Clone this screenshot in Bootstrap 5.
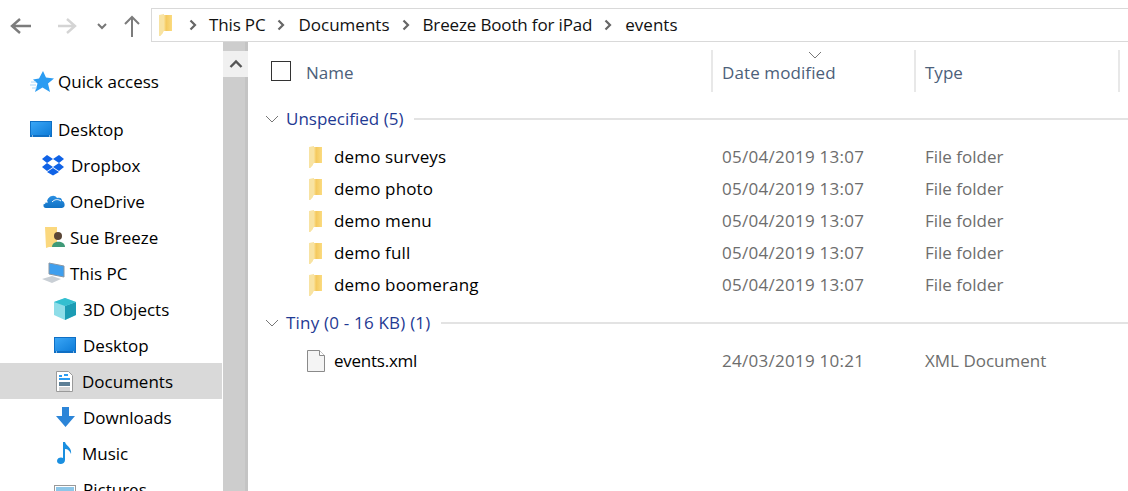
<!DOCTYPE html>
<html lang="en"><head><meta charset="utf-8"><title>events</title>
<link rel="stylesheet" href="https://cdn.jsdelivr.net/npm/bootstrap@5.3.0/dist/css/bootstrap.min.css">
<style>
html,body{height:491px;overflow:hidden;background:#fff}
body{font-family:"Open Sans","Noto Sans",sans-serif;font-size:17px;color:#000;line-height:1.2}
.topbar{height:42px;padding-top:8px}
.navbtns{width:151px;flex:none}
.navbtns svg{position:relative;top:1px}
.addr{height:34px;border:1px solid #d9d9d9;border-right:0;flex:1;padding-left:6px}
.crumb{color:#111}
.tight{letter-spacing:-.15px}
.sep{margin:0 13px 0 12px}
.sep0{margin:0 12px 0 17px}
.main{height:449px}
.sidepane{width:222px;flex:none;padding-top:22px}
.sideitem{height:36px;display:flex;align-items:center;padding-top:2px}
.sideitem svg{flex:none;margin-top:-2px}
.sideitem.firstitem{padding-top:0}
.sideitem.firstitem svg{margin-top:0}
.ind1{padding-left:30px}.ind2{padding-left:42px}.ind3{padding-left:54px}
.gapitem{margin-top:11px}
.active-row{background:#d9d9d9}
.ml4{margin-left:4px}.ml6{margin-left:6px}.ml7{margin-left:7px}.ml8{margin-left:8px}.ml9{margin-left:9px}
.shiftl{margin-left:-1px}.shift1{margin-left:1px}.shift2{margin-left:2px}.shift3{margin-left:3px}
.scrolltrack{width:25px;flex:none;margin-left:1px;background:linear-gradient(90deg,#cdcdcd 22px,#c4c4c4 22px);height:449px;padding-top:9px}
.scrollup{height:26px;background:#f0f0f0}
.content{flex:1;min-width:0}
.colhead{height:61px;color:#4c607a;position:relative;padding-top:8px}
.c1{width:465px;flex:none}.c2{width:203px;flex:none}.c3{width:204px;flex:none}
.colhead .cell{height:42px;display:flex;align-items:center;border-right:2px solid #e8e8e8}
.colhead .c1{padding-left:23px}
.colhead .c2,.colhead .c3{padding-left:9px}
.headtxt{padding-top:5px}
.headdate{letter-spacing:.1px}
.chk{width:20px;height:20px;border:1px solid #333;margin-right:15px}
.caret{position:absolute;left:560px;top:9px}
.groupline{height:32px;display:flex;align-items:center;color:#1f3a93;padding-left:17px}
.groupline .ln{flex:1;height:2px;background:#e3e3e3;margin-left:11px}
.groupline span{margin-left:7px}
.wide{letter-spacing:.2px}
.filerow{height:32px;display:flex;align-items:center}
.filerow .c1{display:flex;align-items:center;padding-left:60px;letter-spacing:.15px}
.filerow .c1 span{margin-left:12px}
.filerow .c1 span.xmlname{margin-left:9px;letter-spacing:-.25px}
.filerow .c2,.filerow .c3{padding-left:9px;color:#6d6d6d}
.filerow .c2{letter-spacing:.27px}
.mt-rows,.mt-tiny,.mt-g2{margin-top:6px}
</style></head><body>
<svg width="0" height="0" class="d-block" aria-hidden="true"><defs>
<linearGradient id="fg" x1="0" x2="1" y1="0" y2="0"><stop offset="0" stop-color="#f6d98f"/><stop offset=".35" stop-color="#fce7a6"/><stop offset=".55" stop-color="#f4c95e"/><stop offset="1" stop-color="#fbdb80"/></linearGradient>
<linearGradient id="dg" x1="0" x2="1" y1="0" y2="1"><stop offset="0" stop-color="#3aa6f6"/><stop offset="1" stop-color="#0e7cd8"/></linearGradient>
<linearGradient id="cg" x1="0" x2="0" y1="0" y2="1"><stop offset="0" stop-color="#2a8fe2"/><stop offset="1" stop-color="#1272c4"/></linearGradient>
<symbol id="fld" viewBox="0 0 14 22" preserveAspectRatio="none"><path d="M1 1l13 0v16H5v2l-3 3H1z" fill="url(#fg)"/><path d="M1 1l5-1v17l-4 5H1z" fill="#f8e3a3"/></symbol>
<symbol id="dsk" viewBox="0 0 22 16"><rect width="22" height="16" fill="#0f6fc4"/><rect x="1" y="1" width="20" height="13" fill="url(#dg)"/><path d="M2 15h1M19 15h1" stroke="#fff"/></symbol>
<symbol id="chev" viewBox="0 0 8 12"><path d="M1.500 1.500L6 6l-4.500 4.500" fill="none" stroke="#666" stroke-width="2.200"/></symbol>
<symbol id="grp" viewBox="0 0 14 8"><path d="M1 1l6 6 6-6" fill="none" stroke="#777"/></symbol>
</defs></svg>
<div class="topbar d-flex">
 <div class="navbtns d-flex align-items-center">
  <svg class="ms-2" width="24" height="20" viewBox="0 0 24 20"><path d="M23 10H6M12 3l-8 7 8 7" fill="none" stroke="#7c7c7c" stroke-width="2.400"/></svg>
  <svg style="margin-left:23px" width="24" height="20" viewBox="0 0 24 20"><path d="M3 10h17M12 3l8 7-8 7" fill="none" stroke="#d4d4d4" stroke-width="2.400"/></svg>
  <svg style="margin-left:18px" width="10" height="8" viewBox="0 0 10 8"><path d="M1 2l4 4 4-4" fill="none" stroke="#777" stroke-width="2"/></svg>
  <svg style="margin-left:16px" width="18" height="24" viewBox="0 0 18 24"><path d="M9 23V4M2 10l7-7 7 7" fill="none" stroke="#7c7c7c" stroke-width="2"/></svg>
 </div>
 <div class="addr d-flex align-items-center">
  <svg width="14" height="22"><use href="#fld"/></svg>
  <svg class="sep0" width="8" height="12"><use href="#chev"/></svg>
  <span class="crumb tight">This PC</span>
  <svg class="sep" width="8" height="12"><use href="#chev"/></svg>
  <span class="crumb">Documents</span>
  <svg class="sep" width="8" height="12"><use href="#chev"/></svg>
  <span class="crumb tight">Breeze Booth for iPad</span>
  <svg class="sep" width="8" height="12"><use href="#chev"/></svg>
  <span class="crumb">events</span>
 </div>
</div>
<div class="main d-flex">
 <nav class="sidepane">
  <div class="sideitem ind1 firstitem"><svg width="24" height="22" viewBox="0 0 24 22"><path d="M13 0l3 6.500L24 7.500l-6 5 2 8.500-7.500-4.500L5 21l2.500-8.500L3 8.500l6-1z" fill="#2b9cf2"/><path d="M0 14h6M1 11h5M2 17h5" stroke="#a8d6f8"/></svg><span class="ml4">Quick access</span></div>
  <div class="sideitem ind1 gapitem"><svg width="22" height="16"><use href="#dsk"/></svg><span class="ml6">Desktop</span></div>
  <div class="sideitem ind2"><svg class="shiftl" width="24" height="22" viewBox="0 0 24 22"><path d="M6 1l6 4-6 4-5-4zM18 1l5 4-5 4-6-4zM6 9l6 4-6 4-5-4zM18 9l5 4-5 4-6-4zM12 14l6 4-6 3.500L6 18z" fill="#0f62e6"/></svg><span class="ml6">Dropbox</span></div>
  <div class="sideitem ind2"><svg class="shift1" width="23" height="16" viewBox="0 0 23 16"><path d="M3 15c-4 0-3-6 1-6 0-5 7-9 10-4 4-1 5 1 5 3 3 0 4 7 0 7z" fill="url(#cg)"/><path d="M1 11c2-2 3-2 4-2M9 9c3-3 6-3 9-1" fill="none" stroke="#fff"/></svg><span class="ml4">OneDrive</span></div>
  <div class="sideitem ind2"><svg class="shift3" width="21" height="22" viewBox="0 0 21 22"><path d="M0 1h12v20H4l-3 1z" fill="#fbd87e"/><circle cx="13" cy="10" r="4" fill="#5a4636"/><path d="M7 21c0-7 13-7 13 0z" fill="#3f9a78"/></svg><span class="ml4">Sue Breeze</span></div>
  <div class="sideitem ind2"><svg width="24" height="22" viewBox="0 0 24 22"><path d="M7 1l15 3v11L7 12z" fill="#3f9fee" stroke="#8b97a3"/><path d="M0 17l10-3 9 3-9 4z" fill="#c9cfd5"/></svg><span class="ml4">This PC</span></div>
  <div class="sideitem ind3"><svg width="22" height="22" viewBox="0 0 22 22"><path d="M11 0l11 4v13l-11 5L0 17V4z" fill="#8edde8"/><path d="M11 8v14l11-5V4z" fill="#1c9cb4"/><path d="M0 4l11 4 11-4-11-4z" fill="#33bfd0"/></svg><span class="ml7">3D Objects</span></div>
  <div class="sideitem ind3"><svg width="22" height="16"><use href="#dsk"/></svg><span class="ml7">Desktop</span></div>
  <div class="sideitem ind3 active-row"><svg class="shift2" width="17" height="21" viewBox="0 0 17 21"><path d="M.5.500h12l4 4v16H.5z" fill="#fff" stroke="#9a9a9a"/><path d="M3 5h3M8 4h4M3 8h11" stroke="#2b9cf2" stroke-width="2"/><path d="M3 11h11v4H3z" fill="#5d7f96"/><path d="M3 17h11M3 19h11" stroke="#aaa"/></svg><span class="ml9">Documents</span></div>
  <div class="sideitem ind3"><svg class="shift2" width="19" height="20" viewBox="0 0 19 20"><path d="M6 0h7v9h6l-9.500 11L0 9h6z" fill="#2c85d8"/></svg><span class="ml8">Downloads</span></div>
  <div class="sideitem ind3"><svg class="shift3" width="16" height="22" viewBox="0 0 16 22"><path d="M6 0h2c1 4 7 5 6 12-1-3-3-5-6-5v11c0 5-8 5-8 1s5-4 6-3z" fill="#1a8fe0"/></svg><span class="ml9">Music</span></div>
  <div class="sideitem ind3"><svg class="mt-2" width="22" height="18" viewBox="0 0 22 18"><rect x=".5" y=".5" width="21" height="17" fill="#fff" stroke="#999"/><rect x="2" y="2" width="18" height="7" fill="#8dc6e8"/><rect x="2" y="9" width="18" height="7" fill="#5d8f6c"/></svg><span class="ml7">Pictures</span></div>
 </nav>
 <div class="scrolltrack"><div class="scrollup d-flex justify-content-center align-items-center"><svg width="14" height="10" viewBox="0 0 14 10"><path d="M1.500 8L7 2.500 12.500 8" fill="none" stroke="#555" stroke-width="2.400"/></svg></div></div>
 <main class="content">
  <div class="colhead d-flex">
   <svg class="caret" width="14" height="8"><use href="#grp"/></svg>
   <div class="cell c1"><div class="chk"></div><span class="headtxt">Name</span></div>
   <div class="cell c2"><span class="headtxt headdate">Date modified</span></div>
   <div class="cell c3"><span class="headtxt">Type</span></div>
  </div>
  <div class="groupline"><svg width="14" height="8"><use href="#grp"/></svg><span>Unspecified (5)</span><div class="ln"></div></div>
  <div class="mt-rows">
  <div class="filerow"><div class="c1"><svg width="14" height="22"><use href="#fld"/></svg><span>demo surveys</span></div><div class="c2">05/04/2019 13:07</div><div class="c3">File folder</div></div>
  <div class="filerow"><div class="c1"><svg width="14" height="22"><use href="#fld"/></svg><span>demo photo</span></div><div class="c2">05/04/2019 13:07</div><div class="c3">File folder</div></div>
  <div class="filerow"><div class="c1"><svg width="14" height="22"><use href="#fld"/></svg><span>demo menu</span></div><div class="c2">05/04/2019 13:07</div><div class="c3">File folder</div></div>
  <div class="filerow"><div class="c1"><svg width="14" height="22"><use href="#fld"/></svg><span>demo full</span></div><div class="c2">05/04/2019 13:07</div><div class="c3">File folder</div></div>
  <div class="filerow"><div class="c1"><svg width="14" height="22"><use href="#fld"/></svg><span>demo boomerang</span></div><div class="c2">05/04/2019 13:07</div><div class="c3">File folder</div></div>
  </div>
  <div class="groupline mt-g2"><svg width="14" height="8"><use href="#grp"/></svg><span class="wide">Tiny (0 - 16 KB) (1)</span><div class="ln"></div></div>
  <div class="filerow mt-tiny"><div class="c1"><svg class="shiftl" width="18" height="22" viewBox="0 0 18 22"><path d="M.5.500h12l5 5v16H.5z" fill="#f4f4f4" stroke="#8a8a8a"/><path d="M12.500.500v5h5" fill="#fff" stroke="#8a8a8a"/></svg><span class="xmlname">events.xml</span></div><div class="c2">24/03/2019 10:21</div><div class="c3">XML Document</div></div>
 </main>
</div>
</body></html>
